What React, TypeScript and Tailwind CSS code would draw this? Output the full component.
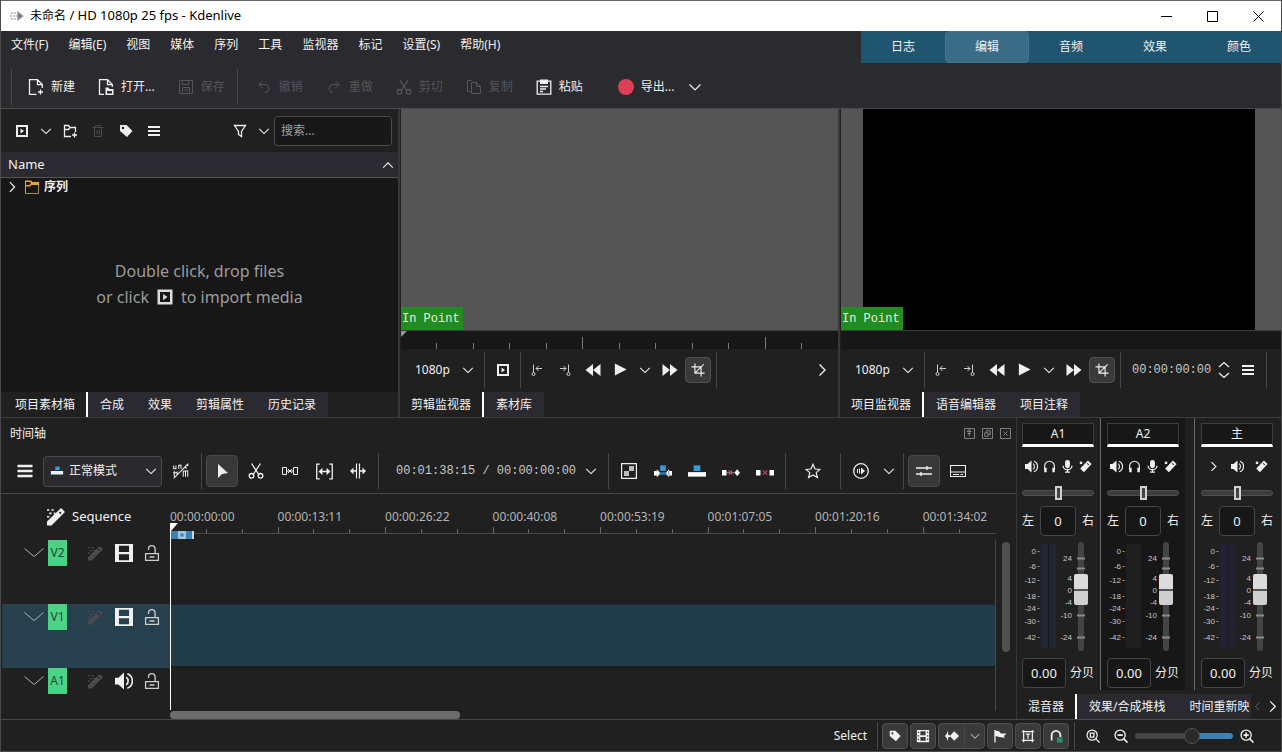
import { useState } from "react";
import type { ReactNode } from "react";
import clsx from "clsx";

const icons = {
  kdenlive: (
    <g fill="none" stroke="#8a8a8a" strokeWidth="1.4">
      <path d="M2 5h5M1 8h7M2 11h5" stroke="#b5b5b5" strokeDasharray="2 1" />
      <path d="M9 4.5 13.5 8 9 11.5z" fill="#777" />
    </g>
  ),
  fileNew: (
    <path
      d="M8.500 15.300h-7V.700h8l4.800 4.800v3.500M9.500.700v5h4.800M12.500 10.500v5M10 13h5"
      fill="none"
      stroke="currentColor"
      strokeWidth="1.300"
    />
  ),
  fileOpen: (
    <>
      <path
        d="M6 15.300H1.500V.700h8l4.800 4.800V8M9.500.700v5h4.800"
        fill="none"
        stroke="currentColor"
        strokeWidth="1.300"
      />
      <path d="M7.500 8.500h3l1 1.500h4v6h-8zM9 12v2.500h5V12z" fill="currentColor" fillRule="evenodd" />
    </>
  ),
  save: (
    <path
      d="M1.500 1.500h13v13h-13zM4.500 1.500v4h6v-4M4.500 14.500v-6h7v6M6 11h4"
      fill="none"
      stroke="currentColor"
    />
  ),
  undo: (
    <path d="M3 5.500h6a4 4 0 0 1 0 8M6.500 2l-3.500 3.500L6.500 9" fill="none" stroke="currentColor" />
  ),
  redo: (
    <path d="M13 5.500H7a4 4 0 0 0 0 8M9.500 2 13 5.500 9.500 9" fill="none" stroke="currentColor" />
  ),
  cut: (
    <g fill="none" stroke="currentColor" strokeWidth="1.300">
      <path d="M3.500.5 10.500 11M12.500.5 5.500 11" />
      <circle cx="3.500" cy="12.800" r="2.300" />
      <circle cx="12.500" cy="12.800" r="2.300" />
    </g>
  ),
  copy: (
    <path
      d="M5.500 12.500h-4v-11h4M5.500 3.500h5l4 4v7h-9zM10.500 3.500v4h4"
      fill="none"
      stroke="currentColor"
    />
  ),
  paste: (
    <>
      <path
        d="M1.200 2.200h13.600v13H1.200zM4 7.500h8M4 10h6M4 12.500h3"
        fill="none"
        stroke="currentColor"
        strokeWidth="1.300"
      />
      <path d="M4 .5h8V5H4z" fill="currentColor" />
    </>
  ),
  record: <circle cx="8" cy="8" r="8" fill="#dd3f58" />,
  clip: (
    <>
      <path d="M2 2h12v12H2zM4 4v8h8V4z" fill="currentColor" fillRule="evenodd" />
      <path d="M6.500 5.500 10 8l-3.500 2.500z" fill="currentColor" />
    </>
  ),
  down: <path d="m2.500 5.500 5.500 5.500 5.500-5.500" fill="none" stroke="currentColor" strokeWidth="1.200" />,
  up: <path d="m2.500 11 5.500-5.500 5.500 5.500" fill="none" stroke="currentColor" strokeWidth="1.200" />,
  right: <path d="m5.500 2.500 5.500 5.500-5.500 5.500" fill="none" stroke="currentColor" strokeWidth="1.400" />,
  left: <path d="m10.500 2.500-5.500 5.500 5.500 5.500" fill="none" stroke="currentColor" strokeWidth="1.400" />,
  spin: (
    <path d="m3 5 5-4.500L13 5M3 11l5 4.500 5-4.500" fill="none" stroke="currentColor" strokeWidth="1.200" />
  ),
  folderAdd: (
    <path
      d="M9 13.500H2.500v-11h4l1.500 2h5.500V9M2.500 6.500h4l1.500-2M12.500 9.500v5M10 12h5"
      fill="none"
      stroke="currentColor"
      strokeWidth="1.300"
    />
  ),
  folder: (
    <>
      <path d="M1.500 5v9.500h13V5" fill="none" stroke="#a58a58" />
      <path d="M1 1.500h6L8.500 3H15v3H7.500L6 7.500H2V14H1z" fill="#e5a72f" />
      <path d="M2 3h4l1 1-1.500 2H2z" fill="#171717" />
    </>
  ),
  trash: (
    <path
      d="M2.500 4.500h11M5.500 4.500v-2h5v2M4.500 4.500v9h7v-9M7 7v4.500M9.500 7v4.500"
      fill="none"
      stroke="currentColor"
    />
  ),
  tag: (
    <path
      d="M2 2h6.500L14.500 8 9 14 2 8zM5 3.800A1.200 1.200 0 1 0 5 6.200 1.200 1.200 0 0 0 5 3.800z"
      fill="currentColor"
      fillRule="evenodd"
    />
  ),
  menu: <path d="M2 3h12v2H2zM2 7h12v2H2zM2 11h12v2H2z" fill="currentColor" />,
  filter: (
    <path d="M2.500 2.500h11l-4 6v5l-3-2v-3z" fill="none" stroke="currentColor" strokeWidth="1.300" />
  ),
  zoneIn: (
    <>
      <path d="M4.500 2.500v8M7 6.500h6M9.500 4 7 6.500 9.500 9" fill="none" stroke="currentColor" />
      <circle cx="4.500" cy="12" r="1.500" fill="none" stroke="currentColor" />
    </>
  ),
  zoneOut: (
    <>
      <path d="M11.500 2.500v8M9 6.500H3M6.500 4 9 6.500 6.500 9" fill="none" stroke="currentColor" />
      <circle cx="11.500" cy="12" r="1.500" fill="none" stroke="currentColor" />
    </>
  ),
  rewind: <path d="M8 2v12L.500 8zM15.500 2v12L8 8z" fill="currentColor" />,
  forward: <path d="M8 2v12l7.500-6zM.500 2v12L8 8z" fill="currentColor" />,
  play: <path d="M2 1.500v13L14.500 8z" fill="currentColor" />,
  crop: (
    <path
      d="M4.500.5v11h11M.5 4.500h11v11M4.500 11.500l10-10"
      fill="none"
      stroke="currentColor"
      strokeWidth="1.300"
    />
  ),
  overwrite: (
    <>
      <path d="M1 8h14v4H1z" fill="#e8f4fb" />
      <path d="M6 3h5v4H6z" fill="#3e9ad6" />
    </>
  ),
  noMix: (
    <path
      d="M1.500 3v3h2V3M6 6V3h2v3M1 9.500h4M2 8v5M4.500 8.500v4M10 8h4v5M10 8v5M12 8v5M12.500 3h2M12.500 3v3M1.500 14.500l13-13"
      fill="none"
      stroke="currentColor"
      strokeWidth="0.900"
    />
  ),
  pointer: <path d="M4 1v14l4-4 6-1z" fill="currentColor" />,
  spacer: (
    <path
      d="M.5 4.500h4v7h-4zM11.500 4.500h4v7h-4zM5 8h6M6 6 8 8 6 10M10 6 8 8l2 2"
      fill="none"
      stroke="currentColor"
    />
  ),
  slip: (
    <>
      <path d="M3.500 1H.7v14h2.800M12.500 1h2.800v14h-2.800" fill="none" stroke="currentColor" strokeWidth="1.200" />
      <path d="M2.500 8 6 4.500v2.700h4V4.500L13.500 8 10 11.500V8.800H6v2.700z" fill="currentColor" />
    </>
  ),
  ripple: (
    <>
      <path d="M6.500.5v15M9.500.5v15" fill="none" stroke="currentColor" strokeWidth="1.200" />
      <path d="M0 8l3.500-3.500v2.700H6v1.600H3.500v2.700zM16 8l-3.500-3.500v2.700H10v1.600h2.500v2.700z" fill="currentColor" />
    </>
  ),
  composite: (
    <>
      <path d="M.6.6h14.800v14.800H.6z" fill="none" stroke="currentColor" strokeWidth="1.200" />
      <path d="M8 3h5v5H8zM3 8h5v5H3z" fill="#bdbdbd" />
    </>
  ),
  insertClip: (
    <>
      <path d="M0 8h3v4H0zM13 8h3v4h-3zM2.500 6.500 6 10l-3.500 3.500zM13.500 6.500 10 10l3.500 3.500z" fill="#fff" />
      <path d="M5.500 3h5v5h-5z" fill="#3e9ad6" />
      <path d="M5 9h6v2.500H5z" fill="#2374a8" />
    </>
  ),
  overwriteClip: (
    <>
      <path d="M0 9h16v4H0z" fill="#fff" />
      <path d="M5 3h6v5H5z" fill="#3e9ad6" />
    </>
  ),
  extract: (
    <>
      <path d="M0 7h4v5H0zM11 9.500 13.500 6.500 16 9.500 13.500 12.500z" fill="#fff" />
      <path d="M4 9.500h7" stroke="#8a8a8a" />
      <path d="m6 7.500 3 4M9 7.500l-3 4" stroke="#c44757" />
    </>
  ),
  lift: (
    <>
      <path d="M0 7h4v5H0zM12 7h4v5h-4z" fill="#fff" />
      <path d="m6 7.500 4 4M10 7.500l-4 4" stroke="#c44757" />
    </>
  ),
  star: (
    <path
      d="m8 1.300 2 4.700 5 .4-3.800 3.200 1.200 5L8 12l-4.400 2.600 1.200-5L1 6.400 6 6z"
      fill="none"
      stroke="currentColor"
      strokeWidth="1.200"
    />
  ),
  preview: (
    <>
      <circle cx="8" cy="8" r="7.300" fill="none" stroke="currentColor" strokeWidth="1.300" />
      <path d="M8 4.500v7L12 8z" fill="currentColor" />
      <path d="M4.500 6v4M6.500 5.500v5" stroke="currentColor" />
    </>
  ),
  sliders: (
    <path d="M0 5h16M0 11h16M11 3v4M5 9v4" fill="none" stroke="currentColor" strokeWidth="1.400" />
  ),
  subtitles: (
    <path d="M.5 2.500h15v11H.5zM.5 9h15M3 11.500h6M10.500 11.500H13" fill="none" stroke="currentColor" strokeWidth="1.100" />
  ),
  wand: (
    <>
      <path d="M12.500 0 16 3.500 4 15.500H0V12z" fill="currentColor" />
      <path d="m11 3.500 1.500 1.500" stroke="#222" strokeWidth="1.300" />
      <path d="M0 1h2v1.500H0zM4 1h2v1.500H4zM2 4h2v1.500H2zM6 4h1.500v1.500H6zM0 7h2v1.500H0z" fill="currentColor" />
    </>
  ),
  wandSmall: (
    <>
      <path d="M11 .5 15.500 5 6 15 1.500 10.500z" fill="currentColor" />
      <path d="m10 4 2 2" stroke="#222" strokeWidth="1.300" />
      <path d="M1 2h3v3H1z" fill="currentColor" />
    </>
  ),
  film: (
    <path
      d="M0 0h16v16H0zM3.500 1.500v5.500h9V1.500zM3.500 9v5.500h9V9z"
      fill="currentColor"
      fillRule="evenodd"
    />
  ),
  filmStrip: (
    <path
      d="M1 1h14v14H1zM5 2.500v4.500h6V2.500zM5 9v4.500h6V9zM2 3v1.500h1.500V3zM2 7v1.500h1.500V7zM2 11v1.500h1.500V11zM12.500 3v1.500H14V3zM12.500 7v1.500H14V7zM12.500 11v1.500H14V11z"
      fill="currentColor"
      fillRule="evenodd"
    />
  ),
  lock: (
    <path
      d="M1.600 8.600h12.800v6.800H1.600zM4.500 5V4a3.300 3.300 0 0 1 6.600 0V8M5.500 12h5"
      fill="none"
      stroke="currentColor"
      strokeWidth="1.300"
    />
  ),
  speaker: (
    <>
      <path d="M0 5h3l5-4.500v15L3 11H0z" fill="currentColor" />
      <path d="M10 4.500a4.500 4.500 0 0 1 0 7M11 1.500a7 7 0 0 1 0 13" fill="none" stroke="currentColor" strokeWidth="1.400" />
    </>
  ),
  headphones: (
    <>
      <path d="M2 12V7.500a6 6 0 0 1 12 0V12" fill="none" stroke="currentColor" strokeWidth="1.400" />
      <path d="M1.500 9.500h3V15h-3zM11.500 9.500h3V15h-3z" fill="currentColor" />
    </>
  ),
  mic: (
    <>
      <rect x="5" y="0" width="6" height="10" rx="3" fill="currentColor" />
      <path d="M2.500 7a5.500 5 0 0 0 11 0M8 12v3M5 15h6" fill="none" stroke="currentColor" strokeWidth="1.600" />
    </>
  ),
  pin: <path d="M.7.700h14.600v14.600H.7zM4 5h7M7.500 5v7M5 8h5M5 3h5" fill="none" stroke="currentColor" strokeWidth="1.400" />,
  float: <path d="M.7.700h14.600v14.600H.7zM4 7h5v5H4zM6.500 7V4H12v5.500H9" fill="none" stroke="currentColor" strokeWidth="1.400" />,
  closeDock: <path d="M.7.700h14.600v14.600H.7zM5 5l6 6M11 5l-6 6" fill="none" stroke="currentColor" strokeWidth="1.400" />,
  keyframe: (
    <>
      <path d="M0 8l3-4 1 3h2v2H4l-1 3z" fill="currentColor" />
      <path d="M5.500 8 10.500 2.500 16 8l-5.500 5.500z" fill="currentColor" />
      <path d="M3 3v10" stroke="currentColor" />
    </>
  ),
  flag: <path d="M1.500 1H3v1l4 .5L9 5h6.500l-3 3 1 2-6.500-1-4-1v7.500H1.500z" fill="currentColor" />,
  title: (
    <path
      d="M3 3h10v10H3zM1 3h2M3 1v2M13 1v2M15 3h-2M1 13h2M3 15v-2M13 15v-2M15 13h-2M5.500 5.800h5M8 5.800V11"
      fill="none"
      stroke="currentColor"
      strokeWidth="1.400"
    />
  ),
  magnet: (
    <>
      <path d="M3 13V7a5 5 0 0 1 10 0v2" fill="none" stroke="currentColor" strokeWidth="2" />
      <path d="M9 9.500h6.500V15.500H9z" fill="#2c8a6a" />
    </>
  ),
  zoomFit: (
    <>
      <circle cx="7" cy="7" r="5.800" fill="none" stroke="currentColor" strokeWidth="1.400" />
      <path d="M5 4.800h4v4.500H5zM11 11l4.500 4.500" fill="none" stroke="currentColor" strokeWidth="1.500" />
    </>
  ),
  zoomOut: (
    <>
      <circle cx="7" cy="7" r="5.800" fill="none" stroke="currentColor" strokeWidth="1.500" />
      <path d="M4 7h6M11 11l4.500 4.500" stroke="currentColor" strokeWidth="1.800" />
    </>
  ),
  zoomIn: (
    <>
      <circle cx="7" cy="7" r="5.800" fill="none" stroke="currentColor" strokeWidth="1.500" />
      <path d="M4 7h6M7 4v6M11 11l4.500 4.500" stroke="currentColor" strokeWidth="1.800" />
    </>
  ),
};

type IconName = keyof typeof icons;

function Icon({ name, className = "size-4" }: { name: IconName; className?: string }) {
  return (
    <svg viewBox="0 0 16 16" className={clsx("shrink-0", className)} aria-hidden="true">
      {icons[name]}
    </svg>
  );
}

type IconButtonProps = {
  readonly icon: IconName;
  readonly label: string;
  readonly className?: string;
  readonly iconClass?: string;
  readonly disabled?: boolean;
};

function IconButton({ icon, label, className, iconClass, disabled }: IconButtonProps) {
  return (
    <button
      type="button"
      aria-label={label}
      disabled={disabled}
      className={clsx("flex shrink-0 items-center justify-center rounded", className)}
    >
      <Icon name={icon} className={iconClass} />
    </button>
  );
}

function Divider({ className = "mx-0.5 h-9" }: { className?: string }) {
  return <div className={clsx("w-px shrink-0 bg-[#484848]", className)} />;
}

const menus = ["文件(F)", "编辑(E)", "视图", "媒体", "序列", "工具", "监视器", "标记", "设置(S)", "帮助(H)"];
const layouts = ["日志", "编辑", "音频", "效果", "颜色"];

function TitleBar() {
  return (
    <header className="flex h-[31px] items-center border-t border-[#666] bg-white text-black">
      <Icon name="kdenlive" className="ml-2 size-4" />
      <h1 className="ml-1 grow pl-px text-xs">
        未命名<span className="text-[13px]"> / HD 1080p 25 fps - Kdenlive</span>
      </h1>
      <button type="button" aria-label="最小化" className="flex h-full w-[46px] items-center justify-center">
        <svg viewBox="0 0 11 11" className="size-[11px]">
          <path d="M0 5.500h11" stroke="#000" />
        </svg>
      </button>
      <button type="button" aria-label="最大化" className="flex h-full w-[46px] items-center justify-center">
        <svg viewBox="0 0 11 11" className="size-[11px]">
          <path d="M.5.500h10v10H.5z" fill="none" stroke="#000" />
        </svg>
      </button>
      <button type="button" aria-label="关闭" className="flex h-full w-[46px] items-center justify-center">
        <svg viewBox="0 0 11 11" className="size-[11px]">
          <path d="m.5.500 10 10m0-10-10 10" stroke="#000" />
        </svg>
      </button>
    </header>
  );
}

function MenuBar() {
  const [layout, setLayout] = useState("编辑");
  return (
    <div className="flex h-8 justify-between">
      <nav className="flex h-7">
        {menus.map((item) => (
          <button key={item} type="button" className="px-[10px]">
            {item}
          </button>
        ))}
      </nav>
      <div className="flex bg-[#1f556f]">
        {layouts.map((item) => (
          <button
            key={item}
            type="button"
            onClick={() => setLayout(item)}
            className={clsx("w-21", item === layout && "rounded border border-[#427590] bg-[#3b6c86]")}
          >
            {item}
          </button>
        ))}
      </div>
    </div>
  );
}

type ActionProps = {
  readonly icon: IconName;
  readonly text: string;
  readonly disabled?: boolean;
};

function Action({ icon, text, disabled }: ActionProps) {
  return (
    <button
      type="button"
      disabled={disabled}
      className={clsx("flex h-8 items-center gap-[7px] px-[11px]", disabled && "text-[#55555a]")}
    >
      <Icon name={icon} />
      {text}
    </button>
  );
}

function MainToolbar() {
  return (
    <div className="flex h-[46px] items-center gap-px border-b border-[#4a4a4a] pt-0.5 pl-[10px]">
      <Divider className="mr-1 h-9" />
      <Action icon="fileNew" text="新建" />
      <Action icon="fileOpen" text="打开..." />
      <Action icon="save" text="保存" disabled />
      <Divider className="mr-1.5 h-9" />
      <Action icon="undo" text="撤销" disabled />
      <Action icon="redo" text="重做" disabled />
      <Action icon="cut" text="剪切" disabled />
      <Action icon="copy" text="复制" disabled />
      <Action icon="paste" text="粘贴" />
      <div className="ml-3 flex items-center">
        <Action icon="record" text="导出..." />
        <IconButton icon="down" label="导出选项" className="size-5" />
      </div>
    </div>
  );
}

type TabsProps = {
  readonly items: string[];
  readonly className?: string;
};

function Tabs({ items, className }: TabsProps) {
  const [active, ...rest] = items;
  return (
    <div role="tablist" className={clsx("flex h-[25px] overflow-hidden", className)}>
      <button
        type="button"
        role="tab"
        aria-selected="true"
        className="shrink-0 border-r-2 border-white pr-[11px] pl-[10px] whitespace-nowrap"
      >
        {active}
      </button>
      {rest.map((item) => (
        <button
          key={item}
          type="button"
          role="tab"
          aria-selected="false"
          className="shrink-0 bg-[#2a2a30] px-3 whitespace-nowrap"
        >
          {item}
        </button>
      ))}
    </div>
  );
}

function ProjectBin() {
  return (
    <section className="flex min-w-0 flex-col border-r-2 border-[#383838]">
      <div className="flex h-[43px] items-center pl-[7px] pr-[6px]">
        <IconButton icon="clip" label="添加素材" className="size-7" />
        <IconButton icon="down" label="添加选项" className="h-7 w-5" iconClass="size-[14px]" />
        <IconButton icon="folderAdd" label="新建文件夹" className="size-7" />
        <IconButton icon="trash" label="删除" className="size-7 text-[#4a4a4a]" disabled />
        <IconButton icon="tag" label="标签" className="size-7" />
        <IconButton icon="menu" label="选项" className="size-7" />
        <div className="grow" />
        <IconButton icon="filter" label="筛选" className="size-7" />
        <IconButton icon="down" label="筛选选项" className="h-7 w-5" iconClass="size-[14px]" />
        <input
          type="search"
          aria-label="搜索"
          placeholder="搜索..."
          className="h-[30px] w-[118px] rounded border border-[#4c4c4c] bg-[#171717] px-1.5 placeholder:text-[#a0a0a0]"
        />
      </div>
      <div className="flex h-[26px] items-center justify-between border-b border-[#555] bg-[#2a2a30] pl-[7px] pr-[3px] text-[13px]">
        <span>Name</span>
        <Icon name="up" className="size-[14px]" />
      </div>
      <div className="flex grow flex-col bg-[#171717]">
        <button type="button" className="flex h-[18px] items-center pl-1 font-bold">
          <Icon name="right" className="size-[14px]" />
          <Icon name="folder" className="mr-1 ml-[5px] size-4" />
          序列
        </button>
        <p className="flex grow flex-col items-center justify-center pb-5 text-base leading-[26px] text-[#9c9c9c]">
          <span>Double click, drop files</span>
          <span className="flex items-center gap-1.5">
            or click <Icon name="clip" className="size-5 text-[#dcdcdc]" /> to import media
          </span>
        </p>
      </div>
      <Tabs items={["项目素材箱", "合成", "效果", "剪辑属性", "历史记录"]} className="pl-1" />
    </section>
  );
}

function ResolutionSelect() {
  return (
    <div className="relative flex h-8 w-[69px] shrink-0 items-center">
      <select aria-label="预览分辨率" className="w-full appearance-none bg-[#202020] text-xs">
        <option>1080p</option>
        <option>720p</option>
        <option>540p</option>
      </select>
      <Icon name="down" className="pointer-events-none absolute right-[9px] size-[14px]" />
    </div>
  );
}

function Transport() {
  return (
    <>
      <IconButton icon="zoneIn" label="设置入点" className="size-7 text-[#cfcfcf]" />
      <IconButton icon="zoneOut" label="设置出点" className="size-7 text-[#cfcfcf]" />
      <IconButton icon="rewind" label="快退" className="size-7" />
      <IconButton icon="play" label="播放" className="h-7 w-[27px]" iconClass="size-[15px]" />
      <IconButton icon="down" label="播放选项" className="h-7 w-[22px]" iconClass="size-[14px]" />
      <IconButton icon="forward" label="快进" className="h-7 w-[27px]" />
      <IconButton
        icon="crop"
        label="裁剪"
        className="mx-0.5 size-[26px] border border-[#505050] bg-[#3a3a3a]"
        iconClass="size-[14px]"
      />
    </>
  );
}

function InPoint() {
  return (
    <span className="flex h-[23px] w-[62px] items-center bg-[#228b22] pl-px font-['Liberation_Mono',monospace] text-[#e4f5dc]">
      In Point
    </span>
  );
}

function ClipMonitor() {
  return (
    <section className="flex min-w-0 flex-col border-r-2 border-[#383838] pl-px">
      <div className="flex grow items-end bg-[#555]">
        <InPoint />
      </div>
      <div className="relative flex h-[19px] items-end border-t border-[#3c3c3c] bg-[#171717] pr-9">
        <svg viewBox="0 0 6 6" className="absolute top-0 left-0 size-[6px]">
          <path d="M0 0h6L0 6z" fill="#8a9a9a" />
        </svg>
        {Array.from({ length: 11 }, (_, i) => (
          <span
            key={i}
            className={clsx("grow border-r border-[#777]", i === 4 || i === 9 ? "h-3" : "h-1.5")}
          />
        ))}
      </div>
      <div className="flex h-[43px] items-center pb-0.5 pl-[14px]">
        <ResolutionSelect />
        <Divider className="h-9" />
        <IconButton icon="clip" label="素材" className="h-7 w-[35px]" />
        <Divider className="mr-0.5 h-9" />
        <Transport />
        <Divider className="ml-[3px] h-9" />
        <div className="grow" />
        <IconButton icon="right" label="更多" className="mr-0.5 size-7" />
      </div>
      <Tabs items={["剪辑监视器", "素材库"]} />
    </section>
  );
}

function ProjectMonitor() {
  return (
    <section className="flex min-w-0 flex-col pl-px">
      <div className="flex grow bg-[#555] pr-[26px] pl-[22px]">
        <div className="flex grow items-end bg-black">
          <div className="-ml-[22px]">
            <InPoint />
          </div>
        </div>
      </div>
      <div className="h-[19px] border-t border-[#3c3c3c] bg-[#171717]" />
      <div className="flex h-[43px] items-center pb-0.5 pl-[14px]">
        <ResolutionSelect />
        <Divider className="mr-0.5 h-9" />
        <Transport />
        <Divider className="ml-[3px] h-9" />
        <label className="ml-[11px] font-['Liberation_Mono',monospace] text-[#c8c8c8]">
          <input aria-label="时间码" defaultValue="00:00:00:00" className="w-20 bg-transparent" />
        </label>
        <IconButton icon="spin" label="调整时间码" className="h-7 w-6" />
        <IconButton icon="menu" label="监视器菜单" className="h-7 w-6" />
        <Divider className="ml-1.5 h-9" />
      </div>
      <Tabs items={["项目监视器", "语音编辑器", "项目注释"]} />
    </section>
  );
}

function TimelineToolbar() {
  return (
    <div className="flex h-[45px] items-center gap-0.5 border-b border-[#484848] pl-2">
      <IconButton icon="menu" label="时间轴菜单" className="size-8" iconClass="size-5" />
      <div className="relative flex h-[31px] w-[119px] shrink-0 items-center">
        <select
          aria-label="编辑模式"
          className="size-full appearance-none rounded border border-[#4c4c4c] bg-[#2a2a2e] pl-[25px]"
        >
          <option>正常模式</option>
          <option>覆盖模式</option>
          <option>插入模式</option>
        </select>
        <Icon name="overwrite" className="pointer-events-none absolute left-[7px] size-[14px]" />
        <Icon name="down" className="pointer-events-none absolute right-1 size-[14px]" />
      </div>
      <IconButton icon="noMix" label="混合" className="h-8 w-[33px]" iconClass="size-[18px]" />
      <Divider />
      <IconButton icon="pointer" label="选择工具" className="size-8 border border-[#4a4a4a] bg-[#383838]" />
      <IconButton icon="cut" label="剃刀工具" className="size-8" />
      <IconButton icon="spacer" label="间隔工具" className="size-8" />
      <IconButton icon="slip" label="滑移工具" className="size-8" iconClass="size-[17px]" />
      <IconButton icon="ripple" label="波纹工具" className="size-8" />
      <Divider />
      <span className="w-[193px] shrink-0 pl-[13px] font-['Liberation_Mono',monospace] whitespace-nowrap text-[#c8c8c8]">
        00:01:38:15 / 00:00:00:00
      </span>
      <IconButton icon="down" label="时间码格式" className="h-8 w-[26px]" iconClass="size-[14px]" />
      <Divider />
      <IconButton icon="composite" label="合成" className="size-8" />
      <IconButton icon="insertClip" label="插入" className="size-8" iconClass="size-[18px]" />
      <IconButton icon="overwriteClip" label="覆盖" className="size-8" iconClass="size-[18px]" />
      <IconButton icon="extract" label="提取" className="size-8" iconClass="size-[18px]" />
      <IconButton icon="lift" label="提升" className="size-8" iconClass="size-[18px]" />
      <Divider />
      <IconButton icon="star" label="收藏" className="h-8 w-[46px]" />
      <Divider />
      <IconButton icon="preview" label="预览渲染" className="size-8" />
      <IconButton icon="down" label="预览选项" className="h-8 w-5" iconClass="size-[14px]" />
      <Divider />
      <IconButton icon="sliders" label="混音器" className="size-8 border border-[#4a4a4a] bg-[#383838]" />
      <IconButton icon="subtitles" label="字幕" className="size-8" />
    </div>
  );
}

type Track = {
  readonly name: string;
  readonly kind: "film" | "speaker";
  readonly active?: boolean;
};

const tracks: Track[] = [
  { name: "V2", kind: "film" },
  { name: "V1", kind: "film", active: true },
  { name: "A1", kind: "speaker" },
];

const marks = [
  "00:00:00:00",
  "00:00:13:11",
  "00:00:26:22",
  "00:00:40:08",
  "00:00:53:19",
  "00:01:07:05",
  "00:01:20:16",
  "00:01:34:02",
];

function TrackHead({ name, kind, active }: Track) {
  return (
    <div
      className={clsx(
        "flex h-16 items-start pl-[22px] last:h-auto",
        active && "bg-[#27404e]",
      )}
    >
      <button type="button" aria-label={"折叠 " + name} className="flex h-[26px] w-6 items-center">
        <svg viewBox="0 0 20 12" className="h-3 w-5">
          <path d="m.5 1.500 9.500 8 9.500-8" fill="none" stroke="#b0b0b0" />
        </svg>
      </button>
      <span className="flex h-[26px] w-[19px] items-center justify-center bg-[#4cd287] text-[#1c4a31]">
        {name}
      </span>
      <IconButton
        icon="wand"
        label="轨道效果"
        className="ml-[14px] h-[26px] w-7 text-[#484c4e]"
        iconClass="size-[15px]"
      />
      <IconButton icon={kind} label="禁用轨道" className="h-[26px] w-[30px]" iconClass="size-[18px]" />
      <IconButton icon="lock" label="锁定轨道" className="h-[26px] w-[26px] text-[#cfcfcf]" />
    </div>
  );
}

function Timeline() {
  return (
    <section className="flex min-w-0 grow flex-col border-r border-[#383838]">
      <div className="flex h-[31px] items-center justify-between pr-0.5 pl-[9px]">
        <h2>时间轴</h2>
        <div className="flex text-[#858585]">
          <IconButton icon="pin" label="固定" className="size-[18px]" iconClass="size-[11px]" />
          <IconButton icon="float" label="浮动" className="size-[18px]" iconClass="size-[11px]" />
          <IconButton icon="closeDock" label="关闭面板" className="size-[18px]" iconClass="size-[11px]" />
        </div>
      </div>
      <TimelineToolbar />
      <div className="flex grow">
        <div className="w-[169px] shrink-0 pl-px">
          <div className="flex h-[46px] items-center gap-[7px] pl-[45px] text-[13px]">
            <Icon name="wand" className="size-[18px]" />
            Sequence
          </div>
          {tracks.map((track) => (
            <TrackHead key={track.name} {...track} />
          ))}
        </div>
        <div className="relative flex min-w-0 grow flex-col">
          <div className="grid h-10 grid-cols-[repeat(7,107fr)_73fr] border-b border-[#484848] pt-[14px] text-[#b4b4b4]">
            {marks.map((mark, i) => (
              <div key={mark} className="flex min-w-0 flex-col justify-between">
                <span className="leading-[18px]">{mark}</span>
                <span className="flex h-1.5 items-end">
                  {(i === marks.length - 1 ? [0, 1] : [0, 1, 2]).map((tick) => (
                    <span
                      key={tick}
                      className={clsx("grow border-l border-[#6a6a6a]", tick ? "h-1" : "h-1.5")}
                    />
                  ))}
                </span>
              </div>
            ))}
          </div>
          <div className="h-1.5" />
          <div className="grow border-r border-[#484848]">
            {tracks.map((track) => (
              <div
                key={track.name}
                className={clsx(
                  track.active
                    ? "h-16 border-t border-b-2 border-[#1c1c1c] border-t-[#1a2a36] bg-[#203c49]"
                    : "h-[42px] first:h-16",
                )}
              />
            ))}
          </div>
          <div className="h-2">
            <div className="h-2 w-[290px] rounded bg-[#6c6c6c]" />
          </div>
          <svg viewBox="0 0 26 190" className="absolute top-7 left-0 h-[190px] w-[26px]">
            <path d="M0 9h24v8H0z" fill="#3f81ae" />
            <path d="M8 9h8v8H8z" fill="#9cc4e0" />
            <path d="M10.500 11.500h3v3h-3z" fill="#3f81ae" />
            <path d="M22 9h2v8h-2z" fill="#c5d5e0" />
            <path d="M0 1h8L1 9v179H0z" fill="#fff" />
          </svg>
        </div>
        <div className="w-5 shrink-0 pt-12 pl-1.5">
          <div className="h-[110px] w-2 rounded bg-[#505050]" />
        </div>
      </div>
    </section>
  );
}

const levelMarks = [
  { text: "0", y: 11 },
  { text: "-6", y: 26 },
  { text: "-12", y: 40 },
  { text: "-18", y: 56 },
  { text: "-24", y: 68 },
  { text: "-30", y: 81 },
  { text: "-42", y: 97 },
];

const gainMarks = [
  { text: "24", y: 18 },
  { text: "4", y: 38 },
  { text: "0", y: 50 },
  { text: "-4", y: 62 },
  { text: "-10", y: 75 },
  { text: "-24", y: 97 },
];

type StripProps = {
  readonly name: string;
  readonly master?: boolean;
  readonly meter: string;
  readonly className?: string;
};

function Strip({ name, master, meter, className }: StripProps) {
  const buttons: IconName[] = master
    ? ["right", "speaker", "wandSmall"]
    : ["speaker", "headphones", "mic", "wandSmall"];
  return (
    <div className={clsx("flex shrink-0 flex-col pt-[5px]", className)}>
      <button
        type="button"
        className="h-6 w-[72px] border border-b-3 border-[#3c3c3c] border-b-white bg-[#171717]"
      >
        {name}
      </button>
      <div className="mt-[7px] flex h-6 w-[72px]">
        {buttons.map((icon) => (
          <IconButton
            key={icon}
            icon={icon}
            label={name + " " + icon}
            className="grow"
            iconClass="size-[13px]"
          />
        ))}
      </div>
      <input
        type="range"
        aria-label={name + " 声像"}
        className="mt-3 mb-[10px] h-1.5 w-[72px] appearance-none rounded border border-[#505050] bg-[#3c3c3c] [&::-webkit-slider-thumb]:h-[14px] [&::-webkit-slider-thumb]:w-[7px] [&::-webkit-slider-thumb]:appearance-none [&::-webkit-slider-thumb]:border-2 [&::-webkit-slider-thumb]:border-[#d0d0d0] [&::-webkit-slider-thumb]:bg-[#444]"
      />
      <label className="flex h-[30px] w-[72px] items-center justify-between">
        左
        <input
          defaultValue="0"
          aria-label={name + " 声像值"}
          className="h-[30px] w-9 rounded border border-[#454545] bg-[#171717] text-center text-[13px]"
        />
        右
      </label>
      <div className="relative mt-1 h-[112px] w-[72px]">
        <svg viewBox="0 0 72 112" className="h-[112px] w-[72px] font-['Liberation_Sans',sans-serif] text-[8px]" fill="#c8c8c8">
          <rect x="19" y="4" width="15" height="104" fill={meter} />
          <path d="M26.500 4v104" stroke="#1a1a1a" />
          {levelMarks.map((m) => (
            <g key={m.text}>
              <text x="14" y={m.y + 3} textAnchor="end">
                {m.text}
              </text>
              <path d={`M15.500 ${m.y + 0.5}h2`} stroke="#9a9a9a" />
            </g>
          ))}
          <rect x="56" y="2" width="6" height="109" rx="3" fill="#444" />
          {gainMarks.map((m) => (
            <g key={m.text}>
              <text x="50" y={m.y + 3} textAnchor="end">
                {m.text}
              </text>
              <path d={`M55 ${m.y + 0.5}h8`} stroke="#8a8a8a" strokeWidth="2" />
            </g>
          ))}
          <path d="M55 28.500h8" stroke="#8a8a8a" strokeWidth="2" />
        </svg>
        <input
          type="range"
          aria-label={name + " 音量"}
          defaultValue={58}
          className="absolute top-0 right-[6px] h-[112px] w-[14px] appearance-none bg-transparent [direction:rtl] [writing-mode:vertical-lr] [&::-webkit-slider-thumb]:h-[31px] [&::-webkit-slider-thumb]:w-[14px] [&::-webkit-slider-thumb]:appearance-none [&::-webkit-slider-thumb]:rounded-xs [&::-webkit-slider-thumb]:bg-[linear-gradient(#dcdcdc_48%,#555_48%,#555_54%,#cfcfcf_54%)]"
        />
      </div>
      <label className="mt-1.5 flex h-[30px] w-[72px] items-center justify-between">
        <input
          defaultValue="0.00"
          aria-label={name + " 分贝"}
          className="h-[30px] w-11 rounded border border-[#454545] bg-[#171717] text-center text-[13px]"
        />
        分贝
      </label>
    </div>
  );
}

function Mixer() {
  return (
    <section className="flex w-[264px] shrink-0 flex-col pl-px">
      <div className="flex grow">
        <Strip name="A1" meter="#1e2833" className="border-r border-[#6a6a6a] pr-1.5 pl-1" />
        <Strip name="A2" meter="#1f1f1f" className="bg-[#171717] pr-1.5 pl-1.5" />
        <div className="w-[10px] border-r border-[#6a6a6a]" />
        <Strip name="主" master meter="#21212f" className="pl-1.5" />
      </div>
      <div className="mt-1 flex items-center">
        <Tabs items={["混音器", "效果/合成堆栈", "时间重新映"]} className="min-w-0 grow" />
        <IconButton icon="left" label="向左滚动" className="h-6 w-3 text-[#666]" iconClass="size-[11px]" />
        <IconButton icon="right" label="向右滚动" className="h-6 w-[18px]" iconClass="size-[15px]" />
      </div>
    </section>
  );
}

function Toggle({ icon, label }: { icon: IconName; label: string }) {
  return (
    <IconButton
      icon={icon}
      label={label}
      className="size-[26px] border border-[#505050] bg-[#3a3a3a]"
      iconClass="size-[14px]"
    />
  );
}

function StatusBar() {
  return (
    <footer className="flex h-8 shrink-0 items-center justify-end border-t border-[#484848] pr-5">
      <span>Select</span>
      <Divider className="mr-1 ml-[10px] h-7" />
      <div className="flex gap-0.5">
        <Toggle icon="tag" label="颜色标签" />
        <Toggle icon="filmStrip" label="视频缩略图" />
        <div className="flex rounded border border-[#505050] bg-[#3a3a3a]">
          <IconButton icon="keyframe" label="音频缩略图" className="h-6 w-[25px]" iconClass="size-[14px]" />
          <IconButton icon="down" label="音频选项" className="h-6 w-5 border-l border-[#484848]" iconClass="size-3" />
        </div>
        <Toggle icon="flag" label="标记注释" />
        <Toggle icon="title" label="适配缩放" />
        <Toggle icon="magnet" label="吸附" />
      </div>
      <Divider className="mr-1 ml-[5px] h-7" />
      <IconButton icon="zoomFit" label="缩放至适合" className="size-7" iconClass="size-[14px]" />
      <IconButton icon="zoomOut" label="缩小" className="size-7" iconClass="size-[14px]" />
      <input
        type="range"
        aria-label="缩放"
        defaultValue={60}
        className="h-1.5 w-[98px] appearance-none rounded bg-[linear-gradient(90deg,#444_60%,#3c82b4_60%)] [&::-webkit-slider-thumb]:size-4 [&::-webkit-slider-thumb]:appearance-none [&::-webkit-slider-thumb]:rounded-full [&::-webkit-slider-thumb]:border [&::-webkit-slider-thumb]:border-[#555] [&::-webkit-slider-thumb]:bg-[#2a2a2a]"
      />
      <IconButton icon="zoomIn" label="放大" className="size-7" iconClass="size-[14px]" />
    </footer>
  );
}

function Shell({ children }: { children: ReactNode }) {
  return (
    <div className="flex min-h-screen flex-col border-x border-b border-[#4a4a4a] bg-[#202020] font-['Noto_Sans','Noto_Sans_CJK_SC',sans-serif] text-xs text-[#f0f0f0]">
      {children}
    </div>
  );
}

export default function App() {
  return (
    <Shell>
      <TitleBar />
      <div className="bg-[#2a2a2f]">
        <MenuBar />
        <MainToolbar />
      </div>
      <main className="flex grow flex-col">
        <div className="grid min-h-[309px] grid-cols-[399fr_440fr_441fr] border-b border-[#3c3c3c]">
          <ProjectBin />
          <ClipMonitor />
          <ProjectMonitor />
        </div>
        <div className="flex grow">
          <Timeline />
          <Mixer />
        </div>
      </main>
      <StatusBar />
    </Shell>
  );
}
